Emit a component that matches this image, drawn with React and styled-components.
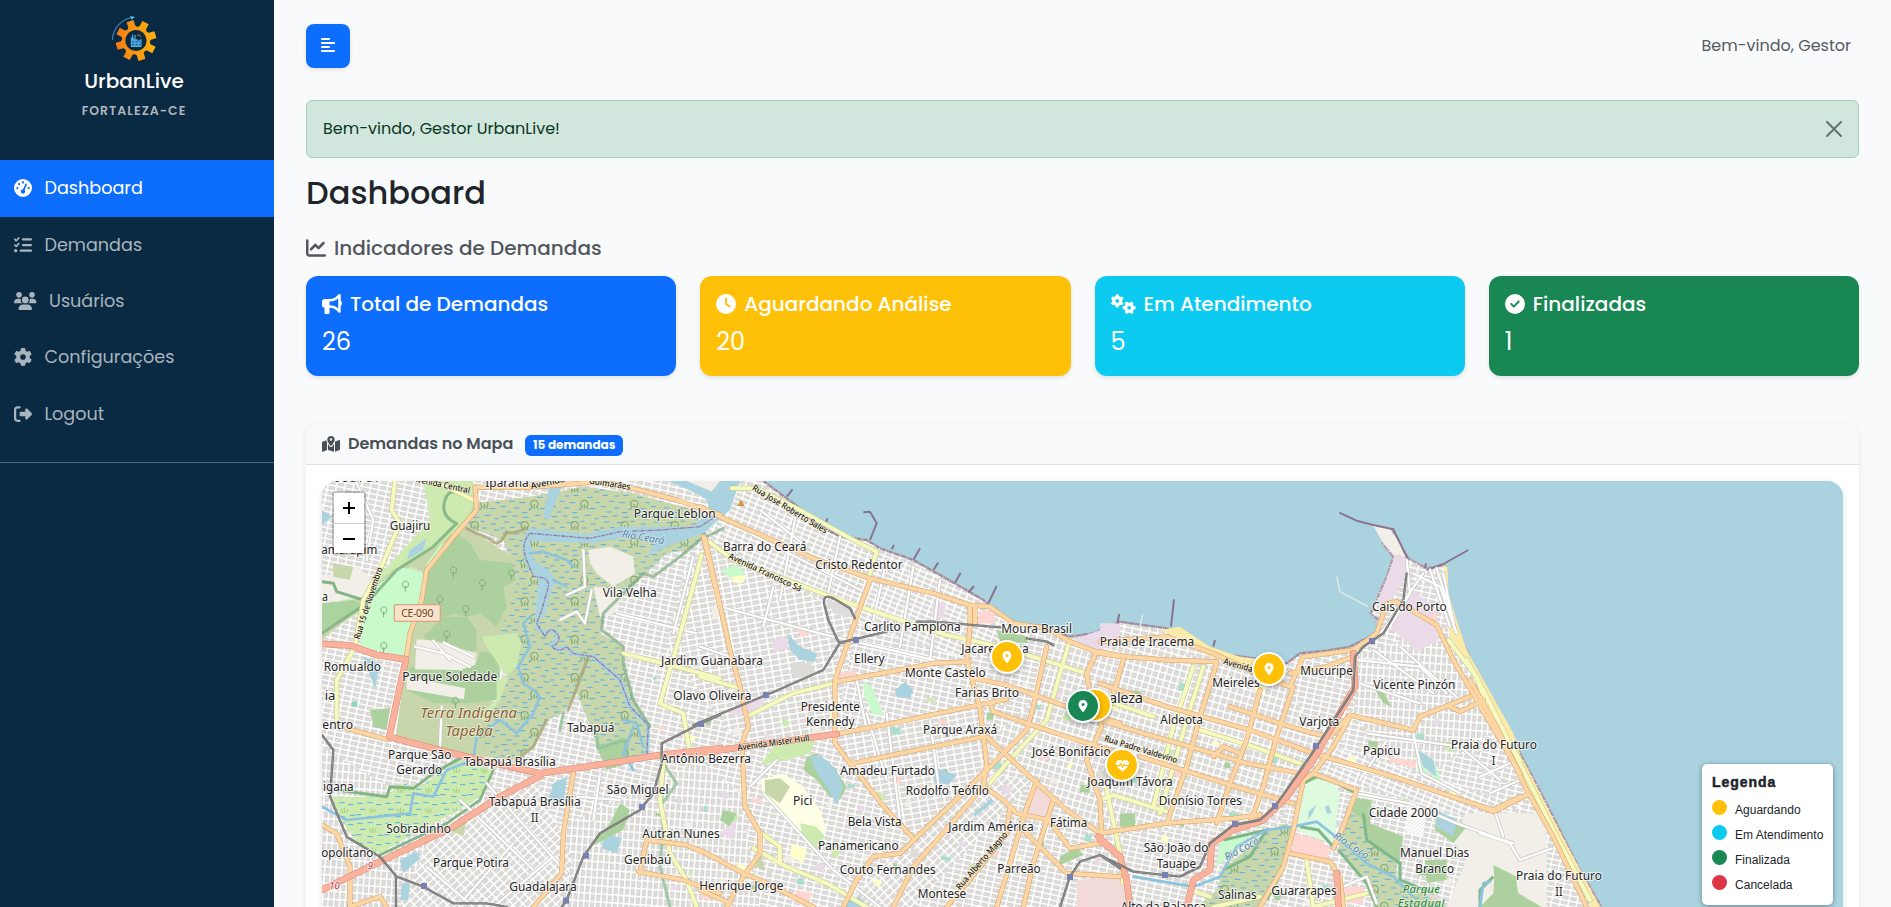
import React from "react";
import styled, { createGlobalStyle } from "styled-components";
import {
  FaAlignLeft,
  FaBullhorn,
  FaChartLine,
  FaCircleCheck,
  FaClock,
  FaGaugeHigh,
  FaGear,
  FaGears,
  FaHeartPulse,
  FaListCheck,
  FaLocationDot,
  FaMapLocationDot,
  FaRightFromBracket,
  FaUsers,
} from "react-icons/fa6";

const GlobalStyle = createGlobalStyle`
  *, *::before, *::after { box-sizing: border-box; }
  html, body { margin: 0; height: 907px; overflow: hidden; }
  body {
    background: #f8fafc;
    color: #212529;
    font-family: Poppins, Inter, "Liberation Sans", sans-serif;
    font-size: 16px;
    line-height: 24px;
  }
  h1, h2, h3, p { margin: 0; font-weight: 500; }
  button { font: inherit; border: 0; padding: 0; }
`;

const Page = styled.div`
  display: flex;
  height: 907px;
  overflow: hidden;
`;

const Sidebar = styled.aside`
  flex: 0 0 274px;
  background: #0a2a43;
  color: #fff;
`;

const Brand = styled.div`
  display: flex;
  flex-direction: column;
  align-items: center;
  height: 160px;
  padding: 15px 6px 0 0;
`;

const BrandName = styled.div`
  margin-top: 8px;
  font-size: 20px;
  font-weight: 500;
  line-height: 24px;
`;

const BrandCity = styled.div`
  margin-top: 8px;
  color: #adb5bd;
  font-size: 12.5px;
  font-weight: 600;
  line-height: 20px;
  letter-spacing: 1px;
`;

const Nav = styled.nav`
  display: flex;
  flex-direction: column;
  padding-bottom: 20px;
  border-bottom: 1px solid #466c80;
`;

const NavItem = styled.a`
  display: flex;
  align-items: center;
  gap: 12.5px;
  height: 56.4px;
  padding-left: 14px;
  font-size: 17.6px;
  color: ${(p) => (p.$active ? "#fff" : "#a9b4bd")};
  background: ${(p) => (p.$active ? "#0d6efd" : "transparent")};
  box-shadow: ${(p) => (p.$active ? "0 1px #0d6efd" : "none")};

  svg { flex: none; height: 18px; width: ${(p) => (p.$wide ? 22.5 : 18)}px; }
`;

const Main = styled.main`
  flex: 1;
  min-width: 0;
  padding: 24px 32px 0;
`;

const TopBar = styled.header`
  display: flex;
  align-items: center;
  justify-content: space-between;
  height: 44px;
  padding-right: 8px;
  color: #555b60;
`;

const ToggleButton = styled.button`
  display: grid;
  place-items: center;
  width: 44px;
  height: 44px;
  padding-bottom: 2px;
  border-radius: 8px;
  background: #0d6efd;
  color: #fff;
  box-shadow: 0 2px 4px rgba(0, 0, 0, 0.1);
`;

const Alert = styled.div`
  display: flex;
  align-items: center;
  justify-content: space-between;
  height: 58px;
  margin-top: 32px;
  padding: 0 16px;
  border: 1px solid #a3cfbb;
  border-radius: 6px;
  background: #d1e7dd;
  color: #0a3622;
`;

const CloseButton = styled.button`
  display: grid;
  background: none;
  color: #000;
  opacity: 0.5;
`;

const PageTitle = styled.h1`
  margin-top: 15px;
  font-size: 32px;
  line-height: 40px;
`;

const SectionTitle = styled.h2`
  display: flex;
  align-items: center;
  gap: 8px;
  margin-top: 23px;
  color: #53575b;
  font-size: 20px;
  line-height: 24px;
`;

const Cards = styled.section`
  display: grid;
  grid-template-columns: repeat(4, 1fr);
  gap: 24px;
  margin-top: 16px;
`;

const StatCard = styled.article`
  height: 100px;
  padding: 16px;
  border-radius: 12px;
  background: ${(p) => p.$color};
  color: #fff;
  box-shadow: 0 2px 4px rgba(0, 0, 0, 0.1);
`;

const StatTitle = styled.h3`
  display: flex;
  align-items: center;
  gap: 8px;
  height: 24px;
  font-size: 20px;
  line-height: 24px;

  svg { height: 20px; }
`;

const StatValue = styled.p`
  margin-top: 8px;
  font-size: 24px;
  font-weight: 400;
  line-height: 36px;
`;

const MapCard = styled.section`
  height: 520px;
  margin-top: 47px;
  border-radius: 12px 12px 0 0;
  background: #fff;
  box-shadow: 0 2px 6px rgba(0, 0, 0, 0.08);
`;

const MapHeader = styled.header`
  display: flex;
  align-items: center;
  height: 42px;
  padding: 0 16px;
  border-bottom: 1px solid #dee2e6;
  border-radius: 12px 12px 0 0;
  background: #f8f9fa;
  color: #495057;
`;

const MapTitle = styled.h3`
  margin: 0 12px 0 8px;
  font-size: 16px;
  font-weight: 600;
`;

const Badge = styled.span`
  width: 98px;
  height: 21px;
  margin-top: 3px;
  border-radius: 6px;
  background: #0d6efd;
  color: #fff;
  font-size: 12px;
  font-weight: 700;
  line-height: 20px;
  text-align: center;
`;

const MapFrame = styled.div`
  position: relative;
  height: 500px;
  margin: 16px 16px 0;
  overflow: hidden;
  border-radius: 16px;
  background: #aad3df;
  box-shadow: 0 2px 6px rgba(0, 0, 0, 0.12);
`;

const MapDrawing = styled.svg`
  display: block;
  width: 1521px;
  height: 426px;
  font-family: "Noto Sans", sans-serif;
`;

const ZoomControl = styled.div`
  position: absolute;
  top: 10px;
  left: 10px;
  width: 34px;
  border: 2px solid rgba(0, 0, 0, 0.2);
  border-radius: 4px;
  background-clip: padding-box;
`;

const ZoomButton = styled.button`
  display: grid;
  place-items: center;
  width: 30px;
  height: 30px;
  background: #fff;
  color: #000;

  & + & { border-top: 1px solid #ccc; }
`;

const Marker = styled.div`
  position: absolute;
  left: ${(p) => p.$x}px;
  top: ${(p) => p.$y}px;
  display: grid;
  place-items: center;
  width: 34px;
  height: 34px;
  transform: translate(-50%, -50%);
  border: 2px solid #fff;
  border-radius: 50%;
  background: ${(p) => p.$color};
  color: #fff;
  box-shadow: 0 2px 5px rgba(0, 0, 0, 0.3);
`;

const Legend = styled.div`
  position: absolute;
  right: 10px;
  top: 283px;
  width: 131px;
  height: 141px;
  padding: 10px;
  border-radius: 5px;
  background: #fff;
  box-shadow: 0 1px 5px rgba(0, 0, 0, 0.4);
  color: #212529;
  font-family: "Liberation Sans", Arial, sans-serif;
`;

const LegendTitle = styled.div`
  margin-bottom: 8px;
  font-size: 14px;
  font-weight: 700;
  line-height: 17px;
  letter-spacing: 0.95px;
  -webkit-text-stroke: 0.5px #212529;
`;

const LegendRow = styled.div`
  display: flex;
  gap: 8px;
  height: 25px;
  font-size: 12px;
  line-height: 23px;
  letter-spacing: 0.02px;
  white-space: nowrap;
`;

const Dot = styled.span`
  flex: 0 0 15px;
  height: 15px;
  margin-top: 1px;
  border-radius: 50%;
  background: ${(p) => p.$color};
`;

const navItems = [
  { label: "Dashboard", Icon: FaGaugeHigh, active: true },
  { label: "Demandas", Icon: FaListCheck },
  { label: "Usuários", Icon: FaUsers, wide: true },
  { label: "Configurações", Icon: FaGear },
  { label: "Logout", Icon: FaRightFromBracket },
];

const stats = [
  { label: "Total de Demandas", value: 26, color: "#0d6efd", Icon: FaBullhorn, iconWidth: 20 },
  { label: "Aguardando Análise", value: 20, color: "#ffc107", Icon: FaClock, iconWidth: 20 },
  { label: "Em Atendimento", value: 5, color: "#0dcaf0", Icon: FaGears, iconWidth: 25 },
  { label: "Finalizadas", value: 1, color: "#198754", Icon: FaCircleCheck, iconWidth: 20 },
];

const legend = [
  { label: "Aguardando", color: "#ffc107" },
  { label: "Em Atendimento", color: "#0dcaf0" },
  { label: "Finalizada", color: "#198754" },
  { label: "Cancelada", color: "#dc3545" },
];

const markers = [
  { x: 685, y: 176, color: "#ffc107" },
  { x: 773, y: 224, color: "#ffc107" },
  { x: 761, y: 225, color: "#198754" },
  { x: 947, y: 188, color: "#ffc107" },
  { x: 800, y: 284, color: "#ffc107", health: true },
];

/* Map data. Each sheet has its own local origin; units are thirds of a pixel. */
const sheets = {
  west: "translate(-1200 -180)",
  center: "translate(0 0)",
  east: "translate(1200 0)",
  coast: "translate(2340 0)",
};

const LAND =
  "M-1134 63H-95L-30 90L40 130L85 110L100 63H190L240 100L300 145L345 190L420 230L500 240L540 265L640 300L720 345L790 385L850 420L870 430L900 465L960 495L1040 510L1110 530L1180 520L1260 485L1330 500L1400 505L1440 510L1500 550L1540 578L1620 595L1700 600L1760 610L1800 580L1880 572L1950 560L2000 540L2038 515L2030 480L2012 460L2030 410L2060 350L2080 290L2048 250L2055 235L2015 195L2070 205L2100 245L2125 295L2180 325L2235 315L2240 380L2260 470L2290 550L2330 640L2400 770L2450 860L2490 935L2540 1030L2590 1130L2640 1230L2705 1341H-1134Z";

const areas = {
  west: [
    ["#cdebb0", "M370 243H520L530 330L480 390L400 480L320 520L250 560L180 640L66 700V640L130 600L220 540L300 460L390 360Z"],
    ["#c8d7ab", "M410 440L480 380L520 340L400 480L380 520L330 500L220 600L150 650L66 720V640L160 600L280 510Z"],
    ["#aad39e", "M66 610L160 600L200 620L66 690Z"],
    ["#f2efe9", "M66 530L170 500L220 540L190 590L66 610Z"],
    ["#c8d7ab", "M100 490L160 500L150 540L100 530Z"],
    ["#c8d7ab", "M430 420L500 380L650 480L650 720L560 880L600 940L590 1070L480 1070L285 1020L320 780L360 520Z"],
    ["#add19e", "M470 400L510 430L540 480L640 490L650 540L610 560L620 620L590 680L540 640L500 650L460 640L380 670L350 640L380 520L430 450Z"],
    ["#c8facc", "M180 600L300 500L372 520L415 470L432 420L380 490L350 640L320 770L180 740Z"],
    ["#add19e", "M370 710L430 650L500 650L530 690L530 750L500 760L410 740Z"],
    ["#add19e", "M540 755L585 760L600 820L590 900L500 910L400 910L320 870L330 800L480 810L530 790Z"],
    ["#f2efe9", "M350 718L400 722L530 760L525 795L480 810L345 808Z"],
    ["#f2efe9", "M320 830L495 865L492 898L320 868Z"],
    ["url(#wet)", "M500 380L520 310L690 290L850 260L1000 280L1180 330L1220 400L1170 450L1100 460L1040 520L910 640L900 700L970 740L970 800L1000 900L1050 980L1040 1080L970 1080L960 1020L890 1050L880 1000L830 880L790 940L740 960L700 1040L640 1080L560 1070L530 990L600 900L620 820L600 700L650 560L640 500L610 420Z"],
    ["url(#grass)", "M140 1190L260 1190L300 1150L360 1160L480 1080L580 1110L540 1190L460 1240L360 1290L240 1360L180 1340L130 1270L90 1190Z"],
    ["#cdebb0", "M545 710L650 700L665 730L650 800L620 830L560 740Z"],
    ["#cdebb0", "M590 840L625 830L600 900L550 960L530 950L590 900Z"],
    ["#add19e", "M890 1040L970 1010L985 1090L920 1110Z"],
    ["#f2efe9", "M865 450L930 440L1000 470L1005 520L940 560L890 520L870 490Z"],
    ["#f2efe9", "M880 560L980 570L940 640L900 650Z"],
    ["#add19e", "M210 930L270 925L260 990L220 980Z"],
    ["#aad3df", "M190 770L240 790L225 868Z"],
    ["#aad3df", "M760 1150L800 1130L790 1220L745 1200Z"],
    ["#aad3df", "M915 1300L965 1315L950 1360L905 1345Z"],
    ["#aad3df", "M300 1380L350 1355L360 1375L310 1420Z"],
    ["#aad3df", "M305 1450H330L325 1500H302Z"],
    ["#c8d7ab", "M450 1290L500 1260L490 1310Z"],
    ["#add19e", "M960 1210L990 1230L970 1290L870 1340L930 1270Z"],
    ["#aad3df", "M330 450L380 415L370 450L320 480Z"],
    ["#aad3df", "M750 243L785 260L745 360L730 350Z"],
    ["#8cd8b8", "M155 905H172V920H155Z"],
    ["#aad3df", "M66 330L98 350L66 375Z"],
    ["#f2efe9", "M1160 243L1260 243V285Z"],
  ],
  center: [
    ["#aad3df", "M262 520L300 560L350 580L345 605L300 600L270 570Z"],
    ["#c8facc", "M60 330L110 315L135 340L100 360Z"],
    ["#ffffcc", "M95 350L138 345L130 368L100 368Z"],
    ["#ebdbe8", "M215 540L255 530L265 565L225 575Z"],
    ["#ffd6d1", "M285 500L330 510L310 535Z"],
    ["#dddcda", "M280 605L330 610L350 640L300 655L268 640Z"],
    ["#ebdbe8", "M700 425L740 430L730 475L695 470Z"],
    ["#f2efe9", "M35 440L60 430V470L38 480Z"],
    ["#aad3df", "M585 690L615 665L640 690L630 715L590 712Z"],
    ["#c8facc", "M490 665L515 680L550 765L520 765L495 710Z"],
    ["#ffd6d1", "M420 640L465 630L470 650L410 665Z"],
    ["#ebdbe8", "M85 760L150 720L195 700L190 730L145 770Z"],
    ["#cdebb0", "M180 915L230 850L345 840L330 880L260 900Z"],
    ["#add19e", "M320 890L350 880L400 920L440 980L420 1020L390 1010L350 960L310 930Z"],
    ["#aad3df", "M330 890L360 885L410 930L430 980L410 1035L385 990L345 930Z"],
    ["#ffffe5", "M180 960L250 940L310 980L360 1050L380 1110L350 1150L310 1120L240 1060L190 1010Z"],
    ["#c8d7ab", "M195 960L240 955L270 980L240 1030L195 1000Z"],
    ["#cdebb0", "M300 1090L350 1100L375 1130L345 1165L310 1140Z"],
    ["#aad3df", "M710 925L770 945L745 975L700 965Z"],
    ["#f2dad9", "M1000 975L1065 1010L1040 1090L980 1060Z"],
    ["#f2dad9", "M1130 1260L1260 1250V1341H1130Z"],
    ["#add19e", "M70 1050L110 1060L90 1100L60 1080Z"],
    ["#ebdbe8", "M60 1120L110 1080L100 1140Z"],
    ["#c8d7ab", "M175 1160L195 1230L165 1220Z"],
    ["#ffd6d1", "M290 1290L340 1300L310 1341L280 1320Z"],
    ["#ffffcc", "M275 1150L320 1170L310 1210L270 1190Z"],
    ["#ebdbe8", "M1120 540L1200 510L1260 490V550L1200 570Z"],
    ["#add19e", "M890 510L980 530L985 550L900 545Z"],
    ["#ffd6d1", "M840 455L880 450L885 490L835 490Z"],
    ["#add19e", "M1080 1190L1130 1160L1150 1185L1080 1215Z"],
    ["#aad3df", "M820 1060L875 1015L880 1025L825 1070Z"],
    ["#aad3df", "M440 1320L480 1310L500 1341H430Z"],
    ["#dddcda", "M375 415L440 440L465 475L400 460Z"],
  ],
  east: [
    ["#fceaa8", "M180 510L240 500L330 560L420 590L500 600L560 620L480 630L330 590L230 530Z"],
    ["#f2efe9", "M820 198L870 208L900 250L912 285L880 285L850 250Z"],
    ["#ebdbe8", "M885 285L915 290L920 340L890 400L860 430L835 420L855 370Z"],
    ["#ebdbe8", "M930 380L1000 440L1015 540L950 575L870 500L910 450Z"],
    ["#ffd6d1", "M985 480L1010 440L1010 480Z"],
    ["#fceaa8", "M1030 315L1042 320L1046 400L1070 480L1100 570L1240 820L1260 880L1240 880L1090 590L1050 530L1035 400Z"],
    ["#add19e", "M820 680L850 695L875 740L850 730Z"],
    ["#ebdbe8", "M0 490L50 490L30 530L0 530Z"],
    ["#defadf", "M625 960L690 955L720 1000L700 1150L660 1140L590 1110L600 1020Z"],
    ["#aad3df", "M625 1055L648 1035L640 1055L625 1080ZM675 1040L685 1035L695 1058L682 1062Z"],
    ["url(#wet)", "M560 1090L580 1110L560 1210L520 1300L480 1341H290L350 1290L375 1220L440 1170L500 1110Z"],
    ["#c8facc", "M360 1150L450 1115L430 1150L350 1220Z"],
    ["#add19e", "M770 1015L815 1020L810 1090L910 1130L900 1200L880 1240L730 1110Z"],
    ["url(#wet)", "M740 1040L790 1080L800 1140L890 1210L890 1260L1040 1341H830L800 1270L715 1170Z"],
    ["#ffd6d1", "M580 1120L660 1140L690 1165L680 1200L575 1180Z"],
    ["#ffd6d1", "M730 1280H790V1330H740Z"],
    ["#ffd6d1", "M870 890L950 905L945 925L870 905Z"],
    ["#c8facc", "M960 870L1000 900L1030 980L990 940L950 930Z"],
    ["#aad3df", "M955 870L1000 900L1010 950L970 920Z"],
    ["#f2efe9", "M1100 1060L1340 1060L1340 1341H1040L1100 1200L1060 1140Z"],
    ["#add19e", "M1010 1060L1100 1100L1060 1150L1005 1110Z"],
    ["#aad3df", "M1010 1050L1070 1080L1060 1130L1010 1100Z"],
    ["#add19e", "M975 1200L1040 1200L1040 1260L980 1270Z"],
    ["#add19e", "M1180 1215L1250 1250L1250 1341H1190Z"],
    ["#f2dad9", "M0 1260L75 1250L80 1341H0Z"],
    ["#add19e", "M60 1060H105V1100H60Z"],
    ["url(#hatch)", "M920 1030L980 1050L970 1130L920 1120Z"],
  ],
  coast: [
    ["#add19e", "M45 1220L105 1250L115 1300L185 1341H0L40 1300Z"],
    ["#fceaa8", "M0 665L30 715L80 820L140 920L200 1040L360 1341H335L180 1060L80 850L0 700Z"],
  ],
};

const trunk = {
  west: ["M66 732L150 736L230 765L318 778L295 880L268 1010L380 1040L540 1080L720 1120L860 1100L1080 1065L1260 1045", "M720 1128L600 1190L460 1280L230 1390L66 1470"],
  center: ["M-20 882L120 862L410 822", "M1195 1130L1260 1190"],
  east: ["M760 580L765 680L690 810L640 900L560 1010L490 1080L400 1110L335 1150L330 1230L280 1260L260 1341", "M0 1140L60 1190L80 1260L90 1341", "M710 1240L715 1341"],
};

const primary = {
  west: ["M690 262L525 262L530 330L460 410L380 510L365 600L330 700L318 778", "M690 262L900 245L1000 265L1130 300L1260 345", "M1210 410L1260 620", "M140 985L260 1018", "M66 1275L110 1300L150 1400V1521", "M820 1120L790 1300L785 1420L700 1521", "M1020 1415L1040 1320L1160 1335L1260 1380", "M1015 1415L1150 1440L1260 1480", "M150 1520L240 1490L260 1521"],
  center: ["M0 140L80 180L240 250L340 295L510 355L700 400L810 435L870 440L940 490L1040 505L1110 545L1200 580L1260 590", "M15 235L90 570L120 680L145 800L125 850L135 1040L180 1120L180 1180L130 1250L80 1341", "M510 360L460 500L405 660V850L450 910L560 1050L640 1135", "M405 665L600 630L700 610L810 605", "M410 822L600 785L740 755L920 718", "M450 912L600 880L850 830", "M810 440V500L800 600L840 745L860 910L850 980L910 1020L950 1060L1045 1080", "M825 440V490M860 830L1000 960L1100 1050L1200 1120", "M820 655L920 675L1100 740L1260 790", "M870 730L880 755L1010 800L1130 840L1260 880", "M1040 560L1000 740L980 810L900 890L850 940L600 1180L520 1190L470 1260L430 1341", "M850 980L720 1130L640 1220L580 1341", "M930 1040L920 1120L800 1270L740 1341", "M975 1060L890 1341", "M1060 1020L1000 1210L970 1341", "M1010 960L960 1100L1100 1240L1260 1250", "M1190 575L1160 640L1170 700L1205 800L1160 900L1200 1020L1205 1120", "M0 1170L130 1240L180 1260L340 1341", "M0 1290L90 1330", "M1045 1080L1110 1165L1200 1150"],
  east: ["M0 545L60 540L200 530L340 580L490 650L570 680L610 590L760 570L830 520L860 430L890 425L1010 495L1060 600L1130 720L1260 940", "M0 575L80 590L200 600L350 605", "M70 600L40 700M0 670L200 740L450 810L640 880L880 950L1100 1025L1180 1050L1260 1010", "M0 780L130 820L340 880L440 910L600 940", "M120 890L280 940L440 990L580 1030", "M350 610L300 770L260 920L200 1090", "M480 690L440 840L390 970L350 1090", "M580 680L530 830L490 980L450 1090", "M390 740L540 790L640 820L690 830L750 765L940 810L960 770L1110 710", "M1050 740L1080 755L1150 720", "M750 770L700 860L640 940L610 960L580 1110L550 1220L480 1341", "M640 940L770 990L730 1100L700 1165", "M0 1120L200 1090L400 1075L480 1065", "M570 1180L690 1205L720 1250L730 1341", "M570 640L680 620L760 590", "M340 890L370 860L420 880"],
  coast: ["M-30 660L50 800L140 990L220 1130L320 1341", "M0 1040L40 1055L140 1005"],
};

const secondary = {
  west: ["M285 243L275 330L300 370L240 510L190 600L165 740L110 840L110 960", "M1205 465L1130 740L1080 910L1150 940L1170 1060", "M970 760L1110 795L1260 835", "M1090 1090L1080 1200L1110 1360L1160 1440L1190 1521", "M370 243L430 255L520 300"],
  center: ["M95 85L170 85L300 150L450 235L530 275L505 355", "M20 240L100 300L260 360L420 420L600 480L740 525L900 560L1160 640", "M0 650L120 685M150 765L280 700L400 670", "M1110 540L1080 640L1040 780L920 910L870 970", "M160 1165L260 1220L380 1270L500 1341", "M185 1120L240 1160L240 1210"],
  east: ["M280 620L220 800L160 1040", "M310 620L260 780L180 1060", "M0 715L160 770M300 810L460 860L600 910", "M0 1020L40 1005L200 1055", "M20 990L60 1180L70 1270", "M1045 540L1130 650L1160 740L1260 900", "M270 1290L330 1310M480 1310L340 1341", "M620 1200L640 1341M640 1341L800 1300"],
  coast: ["M-40 600L10 690L80 830L150 970L220 1110L330 1320"],
};

const minor = {
  west: ["M850 450L855 560L800 585M780 660L830 635L855 670L875 570", "M425 920L420 1040", "M170 250L220 360L200 480", "M1180 470L1120 700", "M950 640L1190 700", "M900 1120L880 1260M830 1190L960 1200", "M480 1200L700 1410M560 1150L800 1420", "M640 1330L490 1500M760 1370L580 1521M380 1400L520 1521", "M345 740L430 760L510 800M400 722L450 780M430 728L520 770"],
  center: ["M180 150L320 260M150 220L500 400M290 150L240 420M420 230L380 420M60 440L360 520L700 600", "M220 380L190 500M0 560L120 600M560 300L520 480M640 320L600 560M720 360L690 600", "M190 1000L400 1230L540 1341M230 900L150 980M470 660L500 810", "M560 760L600 1080M690 780L720 1010M500 760L560 960"],
  east: ["M920 300L930 400L870 500M970 340L850 510L800 560M940 340L1020 380L1070 520", "M990 330L1050 500M1010 325L1060 480M1030 340L1065 510", "M770 600L960 620L1040 700M780 670L960 730", "M940 820L965 940L1080 1000M800 820L1080 860L1200 960", "M770 1000L930 1030L1070 1090L1180 1130L1240 1150", "M820 570L1000 700M900 560L1080 720M860 840L780 960", "M730 1280L800 1250L830 1330", "M700 910L980 980"],
  coast: ["M0 1120L90 1150L120 1200L215 1165", "M0 870L60 830M0 950L90 910M30 1000L120 960", "M40 1040L70 1130"],
};

const rail = {
  west: ["M66 1005L100 1050L90 1190L140 1310L240 1370L290 1430L370 1460L460 1510L560 1510L620 1521", "M288 1430V1521", "M1260 945L1200 972L1085 1030L1085 1090L1060 1180L1020 1230L900 1300L850 1370L800 1500L785 1521"],
  center: ["M-20 795L200 705L370 630L420 548L560 515", "M650 485L700 485L900 502", "M465 475L450 445L400 415Q370 400 372 430L385 480L415 545L430 548", "M1080 1341L1110 1250L1140 1205L1200 1185L1260 1225", "M980 535L1040 545L1060 555"],
  east: ["M920 340L910 420L850 520L790 560L765 590L760 690L650 860L525 1040L480 1080L400 1095L330 1150L300 1220L240 1250L100 1235L0 1185"],
};

const streams = {
  west: ["M690 650L670 670L690 740L655 800L670 850L700 870L720 890L700 940L650 1000L600 960L530 1010L520 1080L440 1110L400 1190L340 1180L330 1240L140 1260L66 1220", "M760 540L800 560M970 960L1010 970L1030 1040M1000 980L970 1060L1000 1110", "M690 460L730 455L800 480L820 500"],
  east: ["M100 1250L280 1280L360 1250L410 1160L500 1110L580 1100L650 1085L720 1140L800 1210L880 1250L940 1310"],
  coast: ["M0 1341L10 1270L30 1265"],
};

const breakwaters = {
  center: ["M490 157L510 155L530 190L510 240", "M260 110L278 88", "M375 200L382 175M575 268L582 255M640 300L660 265M700 330L715 308M765 368L782 338M805 398L822 378M865 430L890 378"],
  east: ["M718 158L770 182L820 195L880 208L925 300", "M980 330L1030 312L1105 270", "M213 500L222 418M52 488L58 462M340 560L345 540", "M975 325L978 310"],
};

const stations = [[3, 792], [198, 705], [468, 540], [-828, 1278], [-174, 1041], [-342, 1187], [-402, 1322], [1110, 1251], [1395, 1245], [1605, 1092], [1725, 1038], [1848, 858], [2016, 543]];

const plotColors = ["#aae0cb", "#ebdbe8", "#cdebb0", "#ffd6d1", "#f2efe9", "#ffffcc", "#add19e", "#dedbd8", "#f2efe9"];
const plots = Array.from({ length: 150 }, (_, i) => ({
  x: -140 + ((i * 617) % 2420),
  y: 650 + ((i * 389) % 670),
  w: 10 + ((i * 7) % 22),
  h: 9 + ((i * 5) % 17),
  color: plotColors[i % plotColors.length],
}));

const labels = {
  west: [
    ["Guajiru", 330, 389, 122], ["Iparana", 621, 260, 130], ["Parque Leblon", 1124, 354, 246], ["Vila Velha", 989, 590, 162],
    ["amarapim", 148, 463, 168], ["Romualdo", 157, 813, 172], ["Parque Soledade", 449, 843, 285], ["Tabapuá", 872, 997, 142],
    ["Parque São", 359, 1077, 190], ["Gerardo", 358, 1122, 138], ["Tabapuá Brasília", 629, 1099, 276], ["entro", 113, 986, 92],
    ["igana", 115, 1172, 92], ["Sobradinho", 356, 1299, 194], ["Tabapuá Brasília", 704, 1218, 276], ["II", 704, 1266, 22],
    ["São Miguel", 1013, 1183, 186], ["Autran Nunes", 1143, 1315, 232], ["Genibaú", 1043, 1391, 142], ["Parque Potira", 513, 1401, 228],
    ["Guadalajara", 729, 1474, 202], ["opolitano", 142, 1371, 156], ["a", 75, 604, 18], ["ia", 90, 900, 32],
  ],
  center: [
    ["Antônio Bezerra", 18, 910, 270], ["Jardim Guanabara", 36, 615, 306], ["Olavo Oliveira", 37, 720, 234], ["Henrique Jorge", 124, 1289, 252],
    ["Barra do Ceará", 194, 272, 250], ["Cristo Redentor", 477, 328, 262], ["Carlito Pamplona", 637, 514, 290], ["Moura Brasil", 1010, 520, 212],
    ["Jacarecanga", 885, 579, 202], ["Ellery", 508, 610, 92], ["Monte Castelo", 736, 650, 242], ["Farias Brito", 861, 712, 192],
    ["Presidente", 391, 752, 178], ["Kennedy", 391, 798, 146], ["Parque Araxá", 780, 822, 222], ["José Bonifácio", 1114, 887, 236],
    ["Amadeu Furtado", 563, 944, 284], ["Rodolfo Teófilo", 742, 1005, 250], ["Pici", 308, 1036, 58], ["Bela Vista", 524, 1097, 162],
    ["Jardim América", 873, 1113, 256], ["Fátima", 1106, 1100, 112], ["Panamericano", 475, 1170, 242], ["Couto Fernandes", 563, 1243, 288],
    ["Parreão", 957, 1238, 130], ["Montese", 726, 1314, 146],
  ],
  east: [
    ["Praia de Iracema", 141, 558, 284], ["Meireles", 408, 680, 142], ["Mucuripe", 680, 644, 158], ["Cais do Porto", 928, 454, 224],
    ["Vicente Pinzón", 943, 687, 246], ["Aldeota", 245, 792, 128], ["Varjota", 658, 798, 120], ["Papicu", 845, 886, 112],
    ["Praia do Futuro", 1182, 868, 258], ["I", 1181, 914, 11], ["Joaquim Távora", 90, 979, 256], ["Dionísio Torres", 301, 1034, 250],
    ["Cidade 2000", 910, 1071, 208], ["Manuel Dias", 1004, 1192, 208], ["Branco", 1004, 1239, 116], ["São João do", 228, 1177, 194],
    ["Tauape", 229, 1224, 118], ["Salinas", 412, 1316, 116], ["Guararapes", 612, 1304, 196], ["Alto da Balança", 190, 1352, 256],
  ],
  coast: [["Praia do Futuro", 237, 1260, 258], ["II", 237, 1308, 22]],
};

const roadNames = {
  west: [
    ["Rua 15 de Novembro", 213, 612, -72, 225], ["Avenida Central", 422, 262, 12, 175],
    ["Avenida", 745, 256, -12, 105], ["Guimarães", 928, 260, 9, 125],
  ],
  center: [
    ["Rua José Roberto Sales", 265, 155, 31, 258], ["Avenida Francisco Sá", 192, 345, 25, 238],
    ["Avenida Mister Hull", 221, 857, -8, 218], ["Rua Alberto Magno", 852, 1208, -49, 220],
  ],
  east: [["Rua Padre Valdevino", 120, 876, 17, 228], ["Avenida", 412, 624, 16, 90]],
};

const SheetLayer = ({ data, render }) =>
  Object.entries(data).map(([sheet, items]) => (
    <g key={sheet} transform={sheets[sheet]}>{items.map(render)}</g>
  ));

const Roads = ({ data, width, edge = 4, casing, fill }) => (
  <g fill="none" strokeLinejoin="round" strokeLinecap="round">
    <g stroke={casing} strokeWidth={width + edge}>
      <SheetLayer data={data} render={(d) => <path key={d} d={d} />} />
    </g>
    <g stroke={fill} strokeWidth={width}>
      <SheetLayer data={data} render={(d) => <path key={d} d={d} />} />
    </g>
  </g>
);

const Streets = ({ id, angle, w, h }) => (
  <pattern id={id} width={w} height={h} patternUnits="userSpaceOnUse" patternTransform={`rotate(${angle})`}>
    <rect width={w} height={h} fill="#fff" />
    <rect x="3" y="3" width={w - 7} height={h - 7} fill="#dfddda" stroke="#c6c4c1" strokeWidth="1.6" />
  </pattern>
);

const districts = [
  ["streets2", "M-1134 860L-600 1180L-200 1000L0 900L120 1000L180 1341H-1134Z"],
  ["streets3", "M-800 1110L-500 940L-380 1200L-420 1341H-900Z"],
  ["streets4", "M20 240L500 350L405 820L120 860L-100 560L-50 340Z"],
  ["streets5", "M100 63L560 270L900 450L1000 520L810 600L500 500L20 230Z"],
  ["streets4", "M405 820L850 740L870 980L650 1140L450 910Z"],
  ["streets3", "M850 940L1000 960L640 1341H430L640 1130Z"],
  ["streets6", "M1040 520L1300 540L1760 660L1860 860L1740 1080L1200 1130L860 850L1000 720Z"],
  ["streets5", "M1900 860L2480 1040L2300 1070L1860 940Z"],
  ["streets2", "M1980 580L2240 500L2400 800L2160 960L1960 770Z"],
];

const CityMap = () => (
  <MapDrawing viewBox="-1134 63 4563 1278" aria-label="Mapa de Fortaleza">
    <defs>
      <Streets id="streets1" angle={12} w={25} h={16} />
      <Streets id="streets2" angle={4} w={17} h={24} />
      <Streets id="streets3" angle={-43} w={24} h={17} />
      <Streets id="streets4" angle={-10} w={26} h={17} />
      <Streets id="streets5" angle={22} w={23} h={15} />
      <Streets id="streets6" angle={16} w={20} h={21} />
      <pattern id="hatch" width="8" height="8" patternUnits="userSpaceOnUse" patternTransform="rotate(45)">
        <rect width="8" height="8" fill="#fff" />
        <path d="M0 0V8" stroke="#d5d3d0" strokeWidth="3" />
      </pattern>
      <pattern id="wet" width="150" height="114" patternUnits="userSpaceOnUse">
        <rect width="150" height="114" fill="#c8d7ab" />
        <path d="M4 8H22M38 6H52M68 10H86M104 4H122M134 14H146M12 24H28M50 26H70M92 22H104M122 30H138M0 42H14M30 40H44M96 42H110M132 48H148M8 58H24M44 60H58M70 58H86M112 64H128M28 76H44M58 80H76M136 80H150M2 92H18M42 96H58M84 100H94M118 98H136M20 108H34M66 110H82" stroke="#5aaee8" strokeWidth="3" />
        <g fill="none" stroke="#7fa876" strokeWidth="3.2">
          <path d="M67 42A11 11 0 1 1 81 42M74 34V48M69 40L63 49M79 40L85 49" />
          <path d="M96 92A11 11 0 1 1 110 92M103 84V98M98 90L92 99M108 90L114 99" />
        </g>
      </pattern>
      <pattern id="grass" width="84" height="60" patternUnits="userSpaceOnUse">
        <rect width="84" height="60" fill="#cdebb0" />
        <path d="M4 10H20M34 8H50M60 14H76M12 28H28M0 44H16M34 50H50M66 46H82" stroke="#5aaee8" strokeWidth="3" />
        <path d="M44 38L40 26M49 38V22M54 38L59 27" stroke="#8dc56c" strokeWidth="2.4" />
      </pattern>
      <clipPath id="land"><path d={LAND} /></clipPath>
    </defs>

    <rect x="-1134" y="63" width="4563" height="1278" fill="#aad3df" />
    <path d={LAND} fill="url(#streets1)" />
    <g clipPath="url(#land)">
      {districts.map(([id, d]) => <path key={d} d={d} fill={`url(#${id})`} />)}
      {plots.map(({ x, y, w, h, color }, i) => (
        <rect key={i} x={x} y={y} width={w} height={h} fill={color} transform={`rotate(${(i % 3) * 9 + 6} ${x} ${y})`} />
      ))}
    </g>
    <path d="M190 63L240 100L300 145L345 190L420 230L500 240L540 265L640 300L720 345L790 385L850 420L900 465L960 495L1040 510L1110 530L1180 520L1260 485L1400 505L1500 550L1540 578L1700 600L1760 610L1800 580L1880 572L1950 560L2038 515" fill="none" stroke="#a08a9c" strokeWidth="7" strokeDasharray="13 2 5 1" />
    <path d="M2035 480L2012 460L2060 350L2080 290L2048 250L2070 205L2125 295L2180 325L2235 315L2240 380L2260 470L2290 550L2330 640L2450 860L2540 1030L2640 1230L2705 1341" fill="none" stroke="#b09aa6" strokeWidth="7" strokeDasharray="16 3 6 2" />

    <SheetLayer data={areas} render={([fill, d]) => <path key={d} d={d} fill={fill} />} />

    {/* Ceará river and its boundary line */}
    <g transform={sheets.west} fill="none" strokeLinejoin="round" strokeLinecap="round">
      <path d="M1105 243L1230 280L1260 243H1320L1290 330L1210 400L1100 440L1040 470L1080 410L960 415L880 430L690 424L700 480L750 515Q775 540 755 570L735 650L705 660L715 540L680 500Q650 420 690 385L860 402L960 380L1180 380L1230 330L1215 290Z" fill="#aad3df" />
      <path d="M710 640L715 690L740 700Q760 680 770 700T755 735Q770 755 790 740L820 760L880 770L960 840L990 920L1045 975L1040 1070" stroke="#aad3df" strokeWidth="13" />
      <path d="M1260 340L1200 380L1080 390L960 395L870 415L690 400Q660 430 680 480L700 530Q750 530 745 560L725 630L710 670L735 710Q750 675 770 700T755 740Q775 760 800 740L820 760L880 770L960 840L990 920L1045 975L1040 1070" stroke="#937ba4" strokeWidth="4" strokeDasharray="10 6 2 6" />
      <path d="M1270 385L1200 420L1140 470L1060 530L1030 520L910 640L905 690L970 740L970 790L1000 900L1050 980" stroke="#7eab83" strokeWidth="9" opacity="0.7" />
      <path d="M680 385Q630 405 620 395Q600 440 580 425T530 400L500 385M740 960L700 1040L650 1080M865 770L805 930" stroke="#a8a379" strokeWidth="9" opacity="0.8" />
      <path d="M66 700L200 610L290 510L400 440L470 370Q420 350 435 300T520 300" stroke="#83b486" strokeWidth="9" opacity="0.9" />
      <path d="M66 545L100 550L110 575L190 600" stroke="#83b486" strokeWidth="9" />
      <path d="M110 1170L260 1190L270 1160L340 1165L400 1120L480 1075" stroke="#83b486" strokeWidth="9" />
      <path d="M580 1110L540 1200L440 1270L240 1365" stroke="#83b486" strokeWidth="8" />
      <path d="M790 940L780 990M890 1000L895 1045L975 1020L985 1080M1090 1090L1130 1150L1080 1220M1090 1260L1080 1400L1110 1521" stroke="#8fc29a" strokeWidth="9" opacity="0.8" />
    </g>
    <g transform={sheets.east} fill="none" stroke="#7fb98a" strokeWidth="9">
      <path d="M610 970L650 950L700 965L770 1000M600 1100L655 1110L700 1160M560 1200L500 1320M370 1230L450 1190L500 1110L370 1140M715 1170L800 1270L830 1341M790 1060L800 1140L900 1210L900 1260L1000 1300M1140 1341V1290L1180 1250" />
    </g>
    <g fill="none" stroke="#8cc4e0" strokeWidth="8" strokeLinejoin="round" strokeLinecap="round">
      <SheetLayer data={streams} render={(d) => <path key={d} d={d} />} />
    </g>
    <g fill="none" stroke="#8a7391" strokeWidth="6" strokeLinejoin="round">
      <SheetLayer data={breakwaters} render={(d) => <path key={d} d={d} />} />
      <path d="M1910 350L1920 395L2005 440M1320 498L1328 462" stroke="#e4ebeb" strokeWidth="4" />
    </g>

    {/* Lone trees of the wooded area */}
    <g transform={sheets.west} fill="none" stroke="#83b07a" strokeWidth="3">
      {[[316, 553], [251, 630], [251, 737], [460, 511], [547, 549], [634, 519], [419, 598], [497, 627], [440, 703], [466, 902]].map(([x, y]) => (
        <path key={`${x}-${y}`} d={`M${x} ${y + 22}V${y + 5}M${x} ${y + 10}A9 10 0 1 1 ${x + 1} ${y + 10}`} />
      ))}
    </g>

    <Roads data={minor} width={7} casing="#c6c4c1" fill="#fff" />
    <Roads data={secondary} width={12} edge={3} casing="#c0c28a" fill="#f7fabf" />
    <Roads data={primary} width={12} edge={3} casing="#d6a063" fill="#fcd6a4" />
    <Roads data={trunk} width={17} edge={3} casing="#df8672" fill="#f9b29c" />
    <Roads data={rail} width={2} edge={5} casing="#707070" fill="#a3a3a3" />
    {stations.map(([x, y]) => <rect key={x} x={x - 9} y={y - 9} width="18" height="18" fill="#7981b0" />)}
    <path d="M123 118L134 138H112Z" fill="#c77400" opacity="0.7" />

    <g transform={sheets.west}>
      <rect x="283" y="614" width="138" height="50" rx="5" fill="#f9e3cd" stroke="#dba782" strokeWidth="4" />
      <text x="352" y="650" fontSize="31" textLength="96" textAnchor="middle" fill="#6b4420">CE-090</text>
      <g fill="#b11e2d" fontSize="28" fontStyle="italic" stroke="#fff" strokeWidth="4" paintOrder="stroke">
        <text x="203" y="1406">9</text>
        <text x="88" y="1467">10</text>
      </g>
      <g fill="#8a5f36" fontSize="42" fontStyle="italic" textAnchor="middle" stroke="#eef0dc" strokeWidth="4" paintOrder="stroke">
        <text x="506" y="955" textLength="290" lengthAdjust="spacingAndGlyphs">Terra Indígena</text>
        <text x="507" y="1008" textLength="142" lengthAdjust="spacingAndGlyphs">Tapeba</text>
      </g>
      <text x="1028" y="422" fontSize="31" fontStyle="italic" textAnchor="middle" textLength="128" transform="rotate(10 1028 422)" fill="#4d80b3" stroke="#d5e8ee" strokeWidth="4" paintOrder="stroke">Rio Ceará</text>
    </g>

    <g fontSize="26" fontWeight="500" textAnchor="middle" fill="#141414" stroke="#fdf5dc" strokeWidth="3" paintOrder="stroke">
      <SheetLayer
        data={roadNames}
        render={([name, x, y, angle, length]) => (
          <text key={`${name}-${x}`} x={x} y={y} textLength={length} lengthAdjust="spacingAndGlyphs" transform={`rotate(${angle} ${x} ${y})`}>{name}</text>
        )}
      />
    </g>

    <g transform={sheets.east} fontSize="31" fontStyle="italic" textAnchor="middle" fill="#4d80b3" stroke="#e3edd8" strokeWidth="4" paintOrder="stroke">
      <text x="430" y="1176" textLength="112" transform="rotate(-28 430 1176)">Rio Cocó</text>
      <text x="748" y="1165" textLength="120" transform="rotate(34 748 1165)">Rio Cocó</text>
      <g fill="#1f7d38" stroke="#e6f2dd" fontSize="34">
        <text x="964" y="1300" textLength="112">Parque</text>
        <text x="963" y="1340" textLength="140">Estadual</text>
      </g>
    </g>

    <g fontSize="36" textAnchor="middle" fill="#262626" stroke="#fff" strokeWidth="6" strokeOpacity="0.75" strokeLinejoin="round" paintOrder="stroke">
      <SheetLayer
        data={labels}
        render={([name, x, y, length]) => (
          <text key={`${name}-${x}`} x={x} y={y} textLength={length} lengthAdjust="spacingAndGlyphs">{name}</text>
        )}
      />
      <text x="1238" y="728" fontSize="44" textLength="182">Fortaleza</text>
      <text x="-1030" y="66" textLength="130">Icaraí</text>
    </g>
  </MapDrawing>
);

const Logo = () => (
  <svg width="50" height="46" viewBox="0 0 50 46" fill="none">
    <defs>
      <linearGradient id="gear" gradientUnits="userSpaceOnUse" x1="7" y1="25" x2="47" y2="25">
        <stop offset="0" stopColor="#f57c14" />
        <stop offset="1" stopColor="#fdb30e" />
      </linearGradient>
    </defs>
    <path
      fill="url(#gear)"
      d={Array.from({ length: 8 }, (_, i) => {
        const at = (r, deg) => {
          const a = ((i * 45 - 107 + deg) * Math.PI) / 180;
          return `${(27 + r * Math.cos(a)).toFixed(2)} ${(25.5 + r * Math.sin(a)).toFixed(2)}`;
        };
        return `${i ? "L" : "M"}${at(14, -19)}L${at(15, -14)}L${at(20.6, -10)}L${at(20.6, 10)}L${at(15, 14)}L${at(14, 19)}`;
      }).join("") + "Z"}
    />
    <circle cx="27" cy="25.5" r="10.6" fill="#0a2a43" />
    <path d="M3.5 25C3.5 14 12 4.5 23 2.5" stroke="#3d86b6" strokeWidth="1.1" />
    <path d="M21 1L26 2L22.5 4.7Z" fill="#58b9e6" />
    <path d="M21.8 32V22.5H23V19.5H24.2V22.5L25.5 24V20H26.7V25L28.5 23.5V26L32.5 24V32Z" fill="#4ba7dc" />
    <path d="M23 27H25M26.5 27H28.5M30 27H31.5M23 29.6H25M26.5 29.6H28.5M30 29.6H31.5" stroke="#14527e" strokeWidth="1" />
    <path d="M28 21L30 19.5L32 22" stroke="#c27820" strokeWidth="1" />
  </svg>
);

const App = () => (
  <>
    <GlobalStyle />
    <Page>
      <Sidebar>
        <Brand>
          <Logo />
          <BrandName>UrbanLive</BrandName>
          <BrandCity>FORTALEZA-CE</BrandCity>
        </Brand>
        <Nav>
          {navItems.map(({ label, Icon, active, wide }) => (
            <NavItem key={label} $active={active} $wide={wide}>
              <Icon />
              {label}
            </NavItem>
          ))}
        </Nav>
      </Sidebar>
      <Main>
        <TopBar>
          <ToggleButton aria-label="Menu"><FaAlignLeft size={16} /></ToggleButton>
          <span>Bem-vindo, Gestor</span>
        </TopBar>
        <Alert>
          <span>Bem-vindo, Gestor UrbanLive!</span>
          <CloseButton aria-label="Fechar">
            <svg width="16" height="16" viewBox="0 0 16 16" stroke="currentColor" strokeWidth="2" strokeLinecap="round">
              <path d="M1 1L15 15M15 1L1 15" />
            </svg>
          </CloseButton>
        </Alert>
        <PageTitle>Dashboard</PageTitle>
        <SectionTitle>
          <FaChartLine />
          Indicadores de Demandas
        </SectionTitle>
        <Cards>
          {stats.map(({ label, value, color, Icon, iconWidth }) => (
            <StatCard key={label} $color={color}>
              <StatTitle>
                <Icon size={iconWidth} />
                {label}
              </StatTitle>
              <StatValue>{value}</StatValue>
            </StatCard>
          ))}
        </Cards>
        <MapCard>
          <MapHeader>
            <FaMapLocationDot size={18} />
            <MapTitle>Demandas no Mapa</MapTitle>
            <Badge>15 demandas</Badge>
          </MapHeader>
          <MapFrame>
            <CityMap />
            {markers.map(({ x, y, color, health }) => (
              <Marker key={x} $x={x} $y={y} $color={color}>
                {health ? <FaHeartPulse size={13} /> : <FaLocationDot size={12} />}
              </Marker>
            ))}
            <ZoomControl>
              <ZoomButton aria-label="Aproximar">
                <svg width="12" height="12" viewBox="0 0 12 12"><path d="M0 6H12M6 0V12" stroke="#000" strokeWidth="2" /></svg>
              </ZoomButton>
              <ZoomButton aria-label="Afastar">
                <svg width="12" height="12" viewBox="0 0 12 12"><path d="M0 6H12" stroke="#000" strokeWidth="2" /></svg>
              </ZoomButton>
            </ZoomControl>
            <Legend>
              <LegendTitle>Legenda</LegendTitle>
              {legend.map(({ label, color }) => (
                <LegendRow key={label}>
                  <Dot $color={color} />
                  {label}
                </LegendRow>
              ))}
            </Legend>
          </MapFrame>
        </MapCard>
      </Main>
    </Page>
  </>
);

export default App;
